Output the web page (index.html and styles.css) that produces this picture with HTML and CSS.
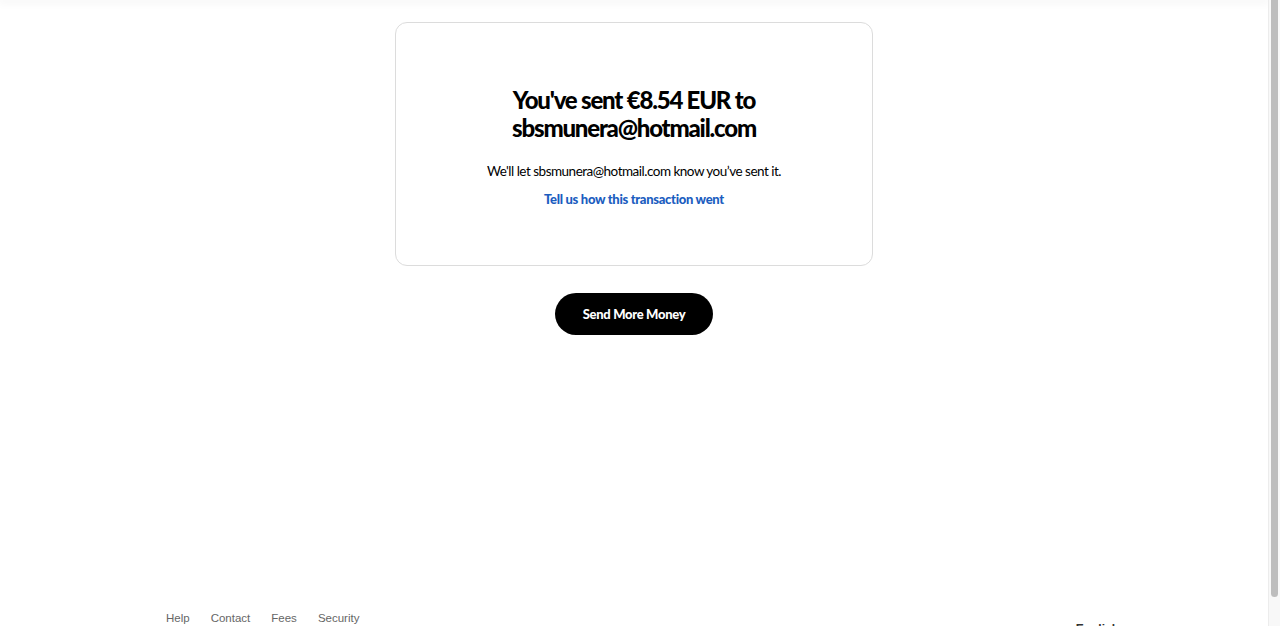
FILE: index.html
```html
<!DOCTYPE html>
<html lang="en">
<head>
  <meta charset="UTF-8" />
  <meta name="viewport" content="width=device-width, initial-scale=1" />
  <title>Payment sent</title>
  <link rel="stylesheet" href="styles.css">
</head>
<body>
  <div class="page">
    <div class="topbar"></div>

    <main class="main">
      <!-- confirmation card -->
      <section class="card">
        <h1 class="card-title">You've sent €8.54 EUR to sbsmunera@hotmail.com</h1>
        <p class="card-text">We'll let sbsmunera@hotmail.com know you’ve sent it.</p>
        <a class="card-link" href="#">Tell us how this transaction went</a>
      </section>

      <div class="actions">
        <button class="btn-primary">Send More Money</button>
      </div>
    </main>

    <footer class="footer">
      <nav class="footer-links">
        <a href="#">Help</a>
        <a href="#">Contact</a>
        <a href="#">Fees</a>
        <a href="#">Security</a>
      </nav>
      <div class="footer-lang">English</div>
    </footer>
  </div>

  <!-- window scrollbar -->
  <div class="scrollbar"><div class="scrollbar-thumb"></div></div>
</body>
</html>
```

FILE: styles.css
```css
html, body {
  height: 100%;
  overflow: hidden;
}
body {
  margin: 0;
  padding: 0;
  background: #fff;
  color: #000;
  font-family: 'Lato', 'Liberation Sans', sans-serif;
  display: flex;
}
.page {
  flex: 1;
  display: flex;
  flex-direction: column;
  min-height: 655px;
}
.topbar {
  height: 0;
  box-shadow: 0 0 10px 2px rgba(0, 0, 0, 0.07);
}
.main {
  flex: 1;
  display: flex;
  flex-direction: column;
  align-items: center;
  padding-top: 22px;
}
.card {
  width: 478px;
  box-sizing: border-box;
  height: 244px;
  border: 1px solid #dcdcdc;
  border-radius: 12px;
  padding: 63px 40px 0;
  text-align: center;
}
.card-title {
  margin: 0 auto;
  max-width: 300px;
  font-size: 24px;
  line-height: 28px;
  font-weight: 900;
  letter-spacing: -1.2px;
}
.card-text {
  margin: 19px 0 0;
  font-size: 13.5px;
  line-height: 20px;
  letter-spacing: -0.5px;
}
.card-link {
  display: inline-block;
  margin-top: 8px;
  font-size: 13px;
  line-height: 20px;
  font-weight: 900;
  color: #1b5dbf;
  text-decoration: none;
  letter-spacing: -0.3px;
}
.actions {
  margin-top: 27px;
}
.btn-primary {
  width: 158px;
  height: 42px;
  border: none;
  border-radius: 21px;
  background: #000;
  color: #fff;
  font-family: 'Lato', 'Liberation Sans', sans-serif;
  font-size: 13px;
  font-weight: 900;
  letter-spacing: -0.3px;
  cursor: pointer;
}
.footer {
  display: flex;
  align-items: flex-start;
  justify-content: space-between;
  width: 936px;
  margin: 0 auto;
  padding-bottom: 18px;
  font-family: 'Liberation Sans', Arial, sans-serif;
  font-size: 11.5px;
  line-height: 15px;
}
.footer-links {
  display: flex;
  gap: 21px;
}
.footer-links a {
  color: #666;
  text-decoration: none;
}
.footer-lang {
  padding-top: 11px;
  margin-right: -17px;
  color: #333;
  font-size: 12px;
  font-weight: bold;
}
.scrollbar {
  width: 12px;
  flex-shrink: 0;
  background: #f8f8f8;
  border-left: 1px solid #ececec;
  padding: 0 2px 0 2px;
  box-sizing: border-box;
}
.scrollbar-thumb {
  height: 597px;
  background: #bdbdbd;
  border-radius: 0 0 4px 4px;
}
```
